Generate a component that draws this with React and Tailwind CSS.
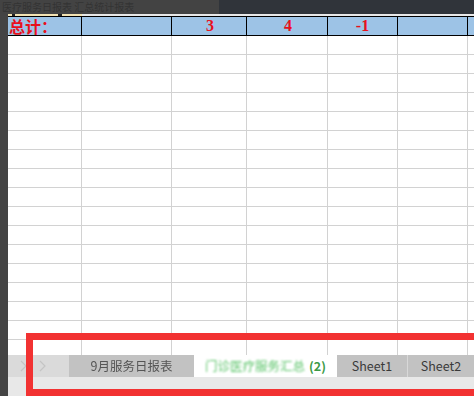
const cols = [74, 90, 75, 81, 70, 70, 20];
const rowCount = 18;

function GridRow({ header, cells }) {
  return (
    <div
      className={
        header
          ? 'flex h-[20px] shrink-0 border-y border-black bg-[#9dc3e6]'
          : 'flex h-[19px] shrink-0 border-b border-[#d2d2d2]'
      }
    >
      {cols.map((w, i) => (
        <div
          key={i}
          style={{ width: w }}
          className={
            header
              ? 'flex shrink-0 items-center justify-center border-r border-black text-[16px] font-bold leading-none text-[#e8101c]'
              : 'shrink-0 border-r border-[#d2d2d2]'
          }
        >
          {cells ? cells[i] : null}
        </div>
      ))}
    </div>
  );
}

function Chevron() {
  return (
    <svg width="7" height="12" viewBox="0 0 7 12">
      <path d="M1 1l5 5-5 5" fill="none" stroke="#c4c4c4" strokeWidth="1.2" />
    </svg>
  );
}

export default function App() {
  const headerCells = [
    <span className="w-full pl-[1px] text-left font-['Noto_Sans_CJK_SC',sans-serif]">总计：</span>,
    null,
    <span className="pl-[2px] font-['Liberation_Serif',serif]">3</span>,
    <span className="pl-[2px] font-['Liberation_Serif',serif]">4</span>,
    <span className="font-['Liberation_Serif',serif]">-1</span>,
    null,
    null,
  ];

  return (
    <div className="relative flex h-[396px] w-[474px] flex-col overflow-hidden bg-white font-['Noto_Sans_CJK_SC',sans-serif]">
      {/* window title strip */}
      <div className="flex h-[14px] shrink-0">
        <div className="flex w-[219px] items-center bg-[#434343] pl-[2px]">
          <span className="whitespace-nowrap text-[10px] leading-[12px] text-[#333]">
            医疗服务日报表 汇总统计报表
          </span>
        </div>
        <div className="flex-1 bg-[#30343a]" />
      </div>

      <div className="flex min-h-0 flex-1">
        <div className="w-[8px] shrink-0 bg-[#444444]" />

        <div className="flex min-w-0 flex-1 flex-col">
          {/* frozen edge */}
          <div className="flex h-[2px] shrink-0">
            <div className="relative w-[74px] bg-[#f3e3b3]">
              <div className="absolute left-[4px] top-0 h-[2px] w-[3px] bg-[#222]" />
              <div className="absolute left-[50px] top-0 h-[2px] w-[4px] bg-[#222]" />
            </div>
            <div className="flex-1 bg-[#e8e8e8]" />
          </div>

          <GridRow header cells={headerCells} />

          <div className="flex min-h-0 flex-1 flex-col overflow-hidden">
            {Array.from({ length: rowCount }).map((_, i) => (
              <GridRow key={i} />
            ))}
          </div>

          {/* sheet tabs */}
          <div className="flex h-[22px] shrink-0 bg-[#dadada] text-[12.5px] text-[#3a3a3a]">
            <div className="flex w-[61px] shrink-0 items-center gap-[12px] pl-[12px]">
              <Chevron />
              <Chevron />
            </div>
            <div className="flex w-[125px] shrink-0 items-center justify-center bg-[#c2c2c2]">
              <span className="text-[#555] blur-[0.7px]">9月服务日报表</span>
            </div>
            <div className="flex w-[143px] shrink-0 items-center justify-center gap-[4px] bg-white">
              <span className="text-[#5cc46a] blur-[1.2px]">门诊医疗服务汇总</span>
              <span className="font-bold text-[#3c9a46]">(2)</span>
            </div>
            <div className="flex w-[71px] shrink-0 items-center justify-center border-r border-[#d8d8d8] bg-[#c2c2c2]">
              Sheet1
            </div>
            <div className="flex flex-1 items-center justify-center bg-[#c2c2c2]">Sheet2</div>
          </div>
          <div className="h-[19px] shrink-0 bg-[#e8e8e8]" />
        </div>
      </div>

      {/* annotation box */}
      <div className="absolute left-[26px] top-[333px] h-[63px] w-[460px] border-[7px] border-[#f23232]" />
    </div>
  );
}
